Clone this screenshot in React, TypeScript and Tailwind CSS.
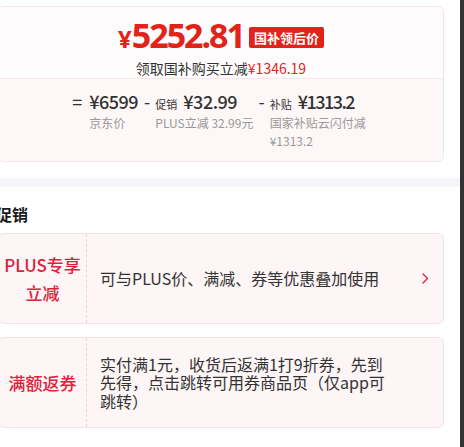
import React from 'react';

const font = { fontFamily: '"Noto Sans CJK SC", "Noto Sans", sans-serif' };

const Breakdown: React.FC = () => (
  <div className="flex justify-center items-start text-[#333]">
    <span className="text-[18px] leading-[24px] mr-[7px]">=</span>
    <div className="flex flex-col mr-[6px]">
      <span className="text-[18px] leading-[24px] font-medium tracking-[-0.5px]">¥6599</span>
      <span className="text-[12px] leading-[18px] text-[#999] mt-[1px]">京东价</span>
    </div>
    <span className="text-[18px] leading-[24px] mr-[5px]">-</span>
    <div className="flex flex-col mr-[5px]">
      <div className="flex items-baseline">
        <span className="text-[11px] mr-[6px]">促销</span>
        <span className="text-[18px] leading-[24px] font-medium tracking-[-0.5px]">¥32.99</span>
      </div>
      <span className="text-[12px] leading-[18px] text-[#999] mt-[1px]">PLUS立减 32.99元</span>
    </div>
    <span className="text-[18px] leading-[24px] mr-[5px]">-</span>
    <div className="flex flex-col">
      <div className="flex items-baseline">
        <span className="text-[11px] mr-[6px]">补贴</span>
        <span className="text-[18px] leading-[24px] font-medium tracking-[-1.5px]">¥1313.2</span>
      </div>
      <span className="text-[12px] leading-[18px] text-[#999] mt-[1px] w-[100px]">国家补贴云闪付减¥1313.2</span>
    </div>
  </div>
);

const PromoCard: React.FC<{ label: React.ReactNode; text: string; arrow?: boolean }> = ({ label, text, arrow }) => (
  <div className="-ml-[2px] w-[446px] h-[91px] flex rounded-[6px] border border-[#f3e3e6] bg-[#fdf5f6]">
    <div className="w-[88px] shrink-0 flex items-center justify-center text-center border-r border-dashed border-[#ecd3d8] text-[#e1213a] font-medium text-[17px] leading-[28px]">
      {label}
    </div>
    <div className="flex-1 flex items-center pl-[13px] pr-[14px]">
      <p className="flex-1 pr-[30px] text-[16px] leading-[18.5px] text-[#333]">{text}</p>
      <span className="w-[8px] flex justify-end">
        {arrow && (
          <svg width="7" height="11" viewBox="0 0 7 11" fill="none">
            <path d="M1 1l4.5 4.5L1 10" stroke="#e1213a" strokeWidth="1.4" strokeLinecap="round" strokeLinejoin="round" />
          </svg>
        )}
      </span>
    </div>
  </div>
);

const App: React.FC = () => {
  return (
    <div className="flex w-[464px] h-[447px] overflow-hidden bg-white" style={font}>
      <div className="w-[460px] flex flex-col">
        <div className="pt-[6px]">
          <div className="-ml-[2px] w-[446px] rounded-[6px] border border-[#f1e6e8] overflow-hidden">
            <div className="bg-[#fefcfc] h-[71px] flex flex-col items-center pt-[9px]">
              <div className="flex items-center">
                <span className="text-[#e2231a] font-bold leading-[38px] flex items-baseline" style={{ fontFamily: '"Noto Sans", sans-serif' }}>
                  <span className="text-[24px]">¥</span>
                  <span className="text-[34px] tracking-[-2px]">5252.81</span>
                </span>
                <span className="ml-[5px] bg-[#e2231a] text-white font-bold text-[13px] leading-[21px] px-[5px] rounded-[2px]">国补领后价</span>
              </div>
              <div className="text-[14px] leading-[20px] text-[#333]">
                领取国补购买立减<span className="text-[#e2231a]">¥1346.19</span>
              </div>
            </div>
            <div className="border-t border-[#f5e8ea] bg-[#fdf7f7] pt-[10px] pb-[11px]">
              <Breakdown />
            </div>
          </div>
        </div>
        <div className="mt-[16px] h-[9px] bg-[#f5f6fa]" />
        <h3 className="mt-[16px] -ml-[4px] text-[16px] leading-[22px] font-bold text-[#1a1a1a]">促销</h3>
        <div className="mt-[8px] flex flex-col gap-[13px]">
          <PromoCard label={<>PLUS专享<br />立减</>} text="可与PLUS价、满减、券等优惠叠加使用" arrow />
          <PromoCard label="满额返券" text="实付满1元，收货后返满1打9折券，先到先得，点击跳转可用券商品页（仅app可跳转）" />
        </div>
      </div>
      <div className="w-[4px] h-full bg-[#333]" />
    </div>
  );
};

export default App;
